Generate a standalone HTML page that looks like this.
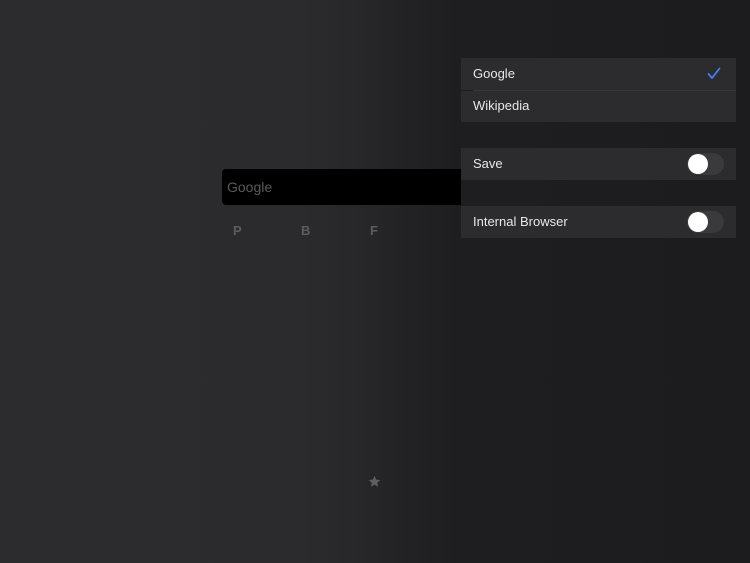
<!DOCTYPE html>
<html><head><meta charset="utf-8"><style>
*{margin:0;padding:0;box-sizing:border-box}
body{width:750px;height:563px;overflow:hidden;font-family:"Liberation Sans",sans-serif;
background:linear-gradient(90deg,#2c2c2e 0px,#2b2b2d 300px,#28282a 350px,#222224 410px,#1e1e20 460px,#1c1c1e 750px);position:relative}
.search{position:absolute;left:222px;top:169px;width:239px;height:36px;background:#000;border-radius:4px 0 0 4px}
.search span{position:absolute;left:5px;top:10px;font-size:14px;color:#5a5a5c}
.l{position:absolute;top:223px;font-size:13px;font-weight:bold;color:#5c5c5e}
.row{position:absolute;left:461px;width:275px;height:32px;background:#2c2c2e;color:#e8e8ea;font-size:13px}
.row span{position:absolute;left:12px;top:8px}
.tg{position:absolute;left:226px;top:5px;width:37px;height:22px;border-radius:11px;background:#3a3a3c}
.tg::after{content:"";position:absolute;left:1px;top:1px;width:20px;height:20px;border-radius:50%;background:#fff}
</style></head><body>
<div class="search"><span>Google</span></div>
<div class="l" style="left:233px">P</div>
<div class="l" style="left:301px">B</div>
<div class="l" style="left:370px">F</div>
<svg style="position:absolute;left:368px;top:475px" width="13" height="13" viewBox="0 0 24 24"><path d="M12 1.5l3.2 7 7.5.7-5.7 5 1.7 7.5L12 17.8 5.3 21.7 7 14.2 1.3 9.2l7.5-.7z" fill="#5e5e60"/></svg>
<div class="row" style="top:58px"><span>Google</span>
<svg style="position:absolute;left:246px;top:9px" width="14" height="13" viewBox="0 0 14 13"><path d="M1.5 7l3.5 4L12.5 1.5" stroke="#3b82f6" stroke-width="1.8" fill="none" stroke-linecap="round" stroke-linejoin="round"/></svg></div>
<div class="row" style="top:91px;height:31px"><span style="top:7px">Wikipedia</span></div>
<div style="position:absolute;left:473px;top:90px;width:263px;height:1px;background:#363638"></div>
<div class="row" style="top:148px"><span>Save</span><div class="tg"></div></div>
<div class="row" style="top:206px"><span>Internal Browser</span><div class="tg"></div></div>
</body></html>
